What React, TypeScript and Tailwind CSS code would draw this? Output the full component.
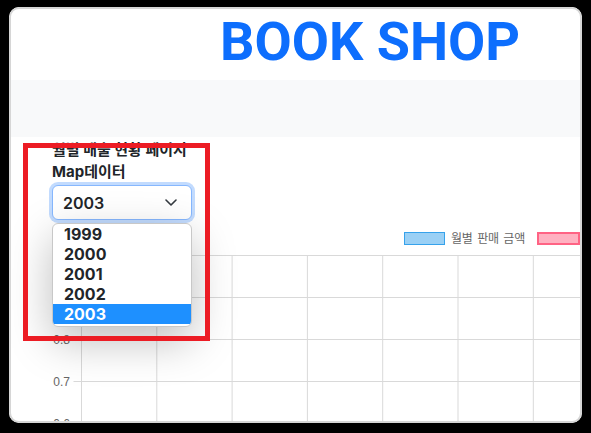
import React from "react";

const years = ["1999", "2000", "2001", "2002", "2003"];

function Chart() {
  const xs = [0, 1, 2, 3, 4, 5, 6].map((i) => 72.5 + i * 75.3);
  const ys = [0, 1, 2, 3, 4].map((i) => 29 + i * 42);
  const labels: [string, number][] = [
    ["0.8", 113],
    ["0.7", 155],
    ["0.6", 197],
  ];
  return (
    <svg width="573" height="197" className="block mt-[6px]">
      {xs.map((x) => (
        <line key={"v" + x} x1={x} y1={29} x2={x} y2={205} stroke="#d9d9d9" strokeWidth={1} />
      ))}
      {ys.map((y) => (
        <line key={"h" + y} x1={64.5} y1={y + 0.5} x2={573} y2={y + 0.5} stroke="#d9d9d9" strokeWidth={1} />
      ))}
      {labels.map(([t, y]) => (
        <text
          key={"l" + t}
          x={61}
          y={y + 4.5}
          textAnchor="end"
          fontFamily="'Liberation Sans', Arial, sans-serif"
          fontSize={12}
          fill="#666"
        >
          {t}
        </text>
      ))}
      <rect x={395.5} y={6.5} width={40} height={12} fill="rgba(54,162,235,0.5)" stroke="rgb(54,162,235)" strokeWidth={1} />
      <text
        x={442}
        y={17}
        fontFamily="'Noto Sans CJK KR', sans-serif"
        fontSize={12}
        letterSpacing={-0.2}
        wordSpacing={2}
        fill="#666"
      >
        월별 판매 금액
      </text>
      <rect x={529} y={7} width={41} height={11} fill="rgba(255,99,132,0.5)" stroke="rgb(255,99,132)" strokeWidth={2} />
    </svg>
  );
}

export default function App() {
  return (
    <div className="w-[591px] h-[433px] bg-black pt-[7px] pl-[9px] pr-[9px] pb-[10px] overflow-hidden font-['Inter','Noto_Sans_CJK_KR',sans-serif]">
      <div className="relative w-full h-full bg-white rounded-[10px] overflow-hidden">
        <header className="h-[73px] pt-[8px] pl-[211px]">
          <h1 className="font-['Roboto',sans-serif] font-bold text-[54px] leading-[54px] text-[#0d6efd]">
            BOOK SHOP
          </h1>
        </header>
        <div className="h-[57px] bg-[#f8f9fa]" />
        <main className="relative h-[286px]">
          <div className="pl-[43px] pt-[2px] text-[#212529]">
            <div className="text-[15px] leading-[22px] font-bold">월별 매출 현황 페이지</div>
            <div className="text-[15px] leading-[22px] font-bold">Map데이터</div>
            <div className="mt-[2px] w-[140px] h-[35px] rounded-[6px] border border-[#86b7fe] shadow-[0_0_0_3px_rgba(13,110,253,0.25)] bg-white flex items-center justify-between pl-[10px] pr-[14px]">
              <span className="text-[16px] font-semibold text-[#212529]">2003</span>
              <svg width="12" height="7" viewBox="0 0 12 7" fill="none">
                <polyline points="1,1 6,6 11,1" stroke="#343a40" strokeWidth="1.6" strokeLinecap="round" strokeLinejoin="round" />
              </svg>
            </div>
          </div>
          <Chart />
          <ul className="absolute left-[43px] top-[86px] w-[140px] bg-white border border-[#c8c8c8] rounded-[6px] pb-[2px] shadow-[0_14px_44px_rgba(0,0,0,0.26)] overflow-hidden">
            {years.map((y) => (
              <li
                key={y}
                className={
                  y === "2003"
                    ? "h-[20px] leading-[20px] pl-[11px] text-[16px] font-bold bg-[#1e90ff] text-white"
                    : "h-[20px] leading-[20px] pl-[11px] text-[16px] font-bold text-[#212529]"
                }
              >
                {y}
              </li>
            ))}
          </ul>
          <div className="absolute left-[14px] top-[6px] w-[187px] h-[198px] border-[5px] border-[#ec1c24]" />
        </main>
        <div className="pointer-events-none absolute inset-0 rounded-[10px] border-2 border-[#d6d6d6]" />
      </div>
    </div>
  );
}
